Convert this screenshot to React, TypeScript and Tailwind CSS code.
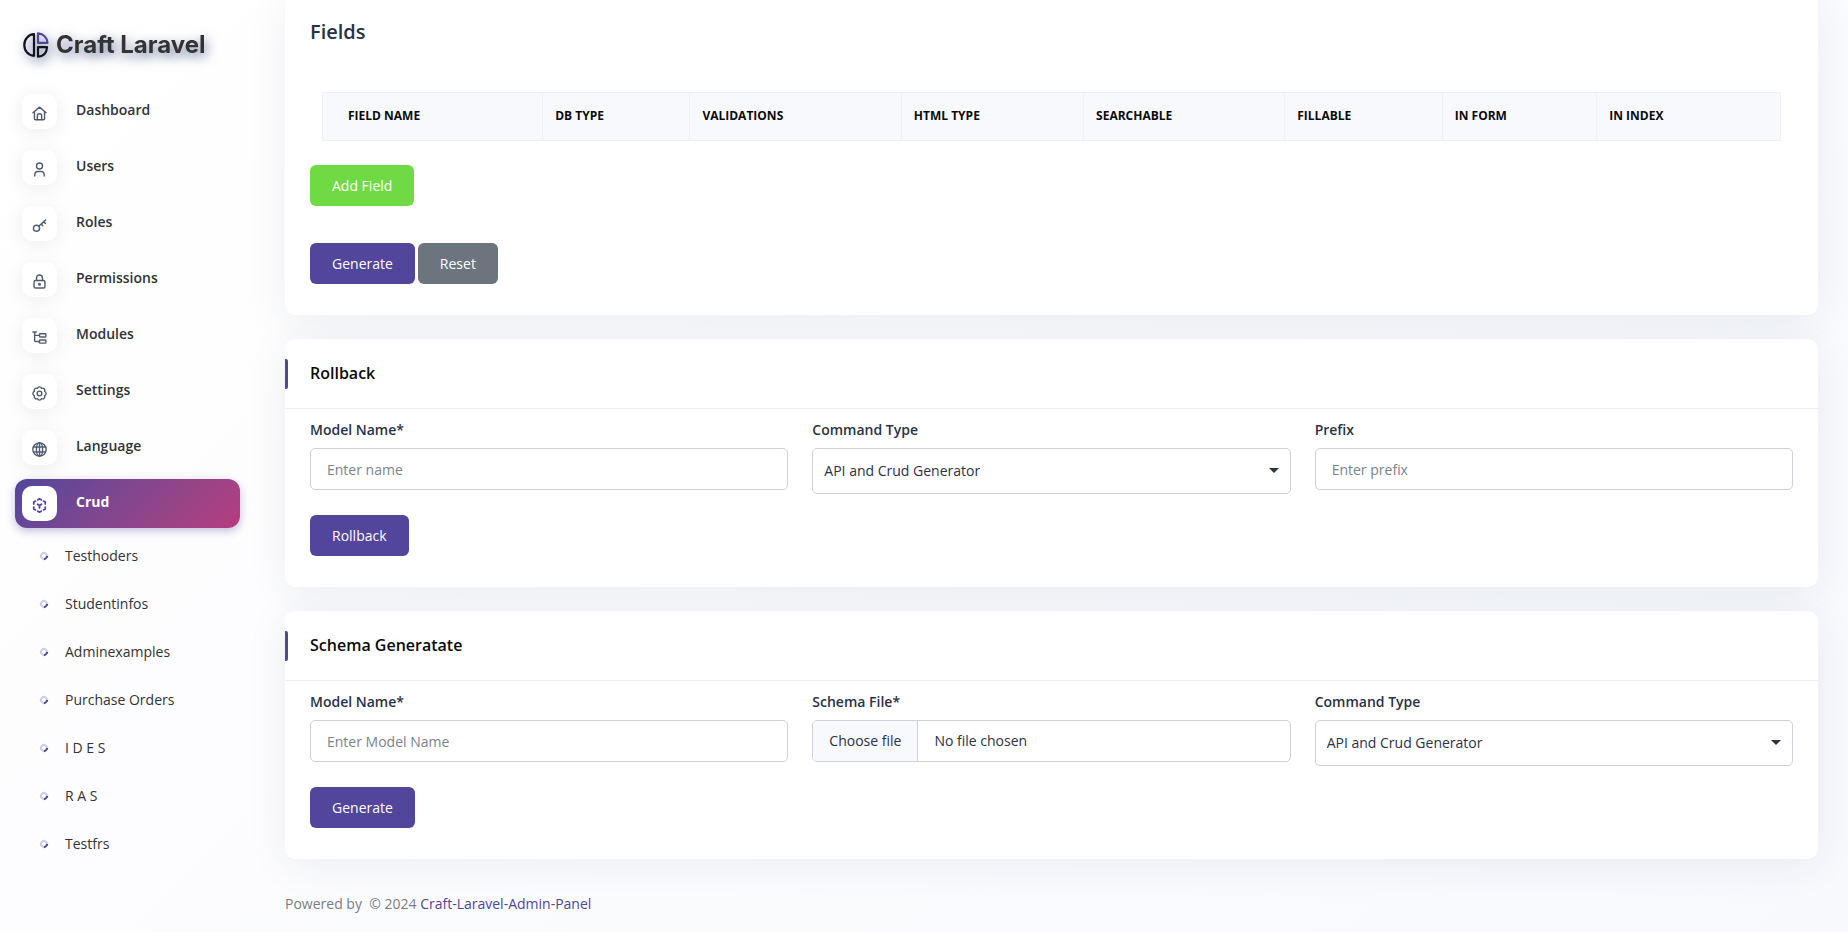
import { useState } from "react";
import type { ReactNode } from "react";

const navItems: { label: string; icon: ReactNode }[] = [
  {
    label: "Dashboard",
    icon: (
      <>
        <path d="M1 7.3 8 1.2l7 6.1" />
        <path d="M2.6 6.3v7.2c0 .8.4 1.2 1.2 1.2h8.4c.8 0 1.2-.4 1.2-1.2V6.3" />
        <path d="M5.7 14.5v-4.2c0-1.3.9-2 2.3-2s2.3.7 2.3 2v4.2" />
      </>
    ),
  },
  {
    label: "Users",
    icon: (
      <>
        <circle cx="8" cy="4.3" r="3.2" />
        <path d="M3 15v-1.6c0-2 1.2-3.3 3.2-3.3h3.6c2 0 3.2 1.300 3.2 3.3V15" />
      </>
    ),
  },
  {
    label: "Roles",
    icon: (
      <>
        <circle cx="4.8" cy="11" r="3.3" />
        <path d="M7.2 8.7 14.6 2M9.8 6.5l1.7 1.8M12.4 4l1.900 1.9" />
      </>
    ),
  },
  {
    label: "Permissions",
    icon: (
      <>
        <rect x="2.2" y="6.9" width="11.6" height="8.1" rx="1.5" />
        <path d="M4.8 6.7V4.4C4.8 2.4 6.1 1 8 1s3.2 1.400 3.2 3.4v2.3" />
        <circle cx="8" cy="10.9" r="0.9" />
      </>
    ),
  },
  {
    label: "Modules",
    icon: (
      <>
        <path d="M1 2.200h3.6M2.8 2.200v9c0 .8.3 1.100 1.100 1.100h4M2.800 5.700h5" />
        <rect x="8" y="4" width="6.8" height="3.4" rx="0.8" />
        <rect x="8" y="10.6" width="6.8" height="3.4" rx="0.8" />
      </>
    ),
  },
  {
    label: "Settings",
    icon: (
      <>
        <path d="M5.740 2.550a2.400 2.400 0 0 1 4.520 0a2.400 2.400 0 0 1 3.190 3.190a2.400 2.400 0 0 1 0 4.520a2.400 2.400 0 0 1-3.190 3.190a2.400 2.400 0 0 1-4.520 0a2.400 2.400 0 0 1-3.190-3.190a2.400 2.400 0 0 1 0-4.520a2.400 2.400 0 0 1 3.190-3.190Z" />
        <circle cx="8" cy="8" r="2.500" />
      </>
    ),
  },
  {
    label: "Language",
    icon: (
      <>
        <circle cx="8" cy="8" r="7.1" />
        <ellipse cx="8" cy="8" rx="3.3" ry="7.1" />
        <path d="M1.500 5.400h13M1.500 10.600h13M8 1v14" />
      </>
    ),
  },
  {
    label: "Crud",
    icon: (
      <>
        <path d="M6.200 1.900 8 .9l1.800 1M12.300 3.300l1.800 1v2M14.100 9.700v2l-1.800 1M9.800 14.100l-1.800 1-1.800-1M3.700 12.700l-1.800-1v-2M1.900 6.300v-2l1.800-1" />
        <path d="M5.900 6.700 8 8l2.100-1.300M8 8v2.600" />
      </>
    ),
  },
];

const subItems = ["Testhoders", "Studentinfos", "Adminexamples", "Purchase Orders", "I D E S", "R A S", "Testfrs"];

const columns = [
  { title: "Field Name", className: "w-[15.1%] pl-[25px]" },
  { title: "DB Type", className: "w-[10.1%] pl-3" },
  { title: "Validations", className: "w-[14.5%] pl-3" },
  { title: "HTML Type", className: "w-[12.5%] pl-3" },
  { title: "Searchable", className: "w-[13.8%] pl-3" },
  { title: "Fillable", className: "w-[10.8%] pl-3" },
  { title: "In Form", className: "w-[10.6%] pl-3" },
  { title: "In Index", className: "pl-3" },
];

const buttonColors = {
  primary: "bg-[#52459c]",
  success: "bg-[#70da44]",
  secondary: "bg-[#6c757d]",
};

const Button = ({ color = "primary", children }: { color?: keyof typeof buttonColors; children: ReactNode }) => (
  <button type="button" className={`h-[41px] rounded-md px-[22px] text-sm font-medium text-white ${buttonColors[color]}`}>
    {children}
  </button>
);

const Logo = () => (
  <a
    href="#"
    className="flex h-[87px] items-center gap-[7px] pt-[3px] pl-[23px] drop-shadow-[2px_4px_6px_rgba(40,55,110,0.7)]"
  >
    <svg width="26" height="26" viewBox="0 0 26 26" fill="none" strokeWidth="2.2" strokeLinejoin="round" className="shrink-0">
      <path d="M11 2.200v21.600C5.500 23.500 1.300 19 1.300 13S5.500 2.500 11 2.200Z" stroke="#11131c" />
      <path d="M15 1.300v9.500h9.500C24 5.600 20.300 1.800 15 1.300Z" stroke="#52459c" />
      <path d="M15 15.200h9c-.3 5.400-3.700 9-9 9.400Z" stroke="#11131c" />
    </svg>
    <span className="font-[Inter,sans-serif] text-2xl font-bold text-[#333]">Craft Laravel</span>
  </a>
);

const Sidebar = () => (
  <aside className="w-[255px] shrink-0">
    <Logo />
    <nav className="px-[15px]">
      <ul className="space-y-[7px]">
        {navItems.map(({ label, icon }) => {
          const active = label === "Crud";
          return (
            <li key={label}>
              <a
                href="#"
                className={`flex h-[49px] items-center gap-[19px] rounded-xl px-[7px] text-sm ${
                  active
                    ? "bg-linear-135 from-[#52459c] to-[#b53c7d] font-bold text-white shadow-[0_3px_8px_rgba(82,69,156,0.35)]"
                    : "font-semibold text-[#333]"
                }`}
              >
                <span
                  className={`flex size-[35px] items-center justify-center rounded-[10px] bg-white pt-[3px] ${
                    active ? "text-[#52459c]" : "text-[#525c70] shadow-[0_3px_20px_rgba(0,0,0,0.08)]"
                  }`}
                >
                  <svg
                    width="15"
                    height="15"
                    viewBox="0 0 16 16"
                    fill="none"
                    stroke="currentColor"
                    strokeWidth={active ? 1.9 : 1.5}
                    strokeLinecap="round"
                    strokeLinejoin="round"
                  >
                    {icon}
                  </svg>
                </span>
                <span className="pb-1">{label}</span>
              </a>
            </li>
          );
        })}
      </ul>
      <ul className="pt-1">
        {subItems.map((label) => (
          <li key={label}>
            <a href="#" className="flex h-12 items-center gap-[17px] pl-[25px] text-sm font-medium text-[#333]">
              <span className="size-2 rotate-45 rounded-full border-2 border-[#c9cfdc] border-r-[#52459c]" />
              {label}
            </a>
          </li>
        ))}
      </ul>
    </nav>
  </aside>
);

const Card = ({ title, children }: { title: string; children: ReactNode }) => (
  <section className="rounded-[10px] bg-white shadow-[0_5px_40px_rgba(40,50,95,0.08)]">
    <header className="flex h-[70px] items-center border-b border-[#eeeff2]">
      <span className="h-[30px] w-[3px] rounded-r-xs bg-[#52459c]" />
      <h2 className="pb-0.5 pl-[22px] text-base font-semibold text-[#0a0a0a]">{title}</h2>
    </header>
    <form className="px-[25px] pt-2.5 pb-[31px]">{children}</form>
  </section>
);

const Field = ({ id, label, children }: { id: string; label: string; children: ReactNode }) => (
  <div>
    <label htmlFor={id} className="mb-2 block text-sm/[21px] font-semibold">
      {label}
    </label>
    {children}
  </div>
);

const TextInput = ({ id, placeholder }: { id: string; placeholder: string }) => (
  <input
    id={id}
    type="text"
    placeholder={placeholder}
    className="h-[42px] w-full rounded-[5px] border border-[#cdd1da] bg-white px-4 text-sm placeholder:text-[#7b838c]"
  />
);

const CommandSelect = ({ id }: { id: string }) => (
  <div className="relative">
    <select
      id={id}
      className="block h-[46px] w-full appearance-none rounded-[5px] border border-[#cdd1da] bg-white pr-8 pl-[11px] text-sm"
    >
      <option>API and Crud Generator</option>
      <option>API Generator</option>
      <option>Crud Generator</option>
    </select>
    <svg width="10" height="5" viewBox="0 0 10 5" className="pointer-events-none absolute top-5 right-3">
      <path d="M0 0h10L5 5Z" fill="#2b3244" />
    </svg>
  </div>
);

export default function App() {
  const [fileName, setFileName] = useState("No file chosen");

  return (
    <div className="flex min-h-screen bg-linear-135 from-white to-[#f8f9fd] font-['Open_Sans',sans-serif] text-[#2b3244]">
      <Sidebar />

      <div className="min-w-0 flex-1 px-[30px]">
        <main className="space-y-6">
          <section className="rounded-b-[10px] bg-white px-[25px] pt-[17px] pb-[31px] shadow-[0_5px_40px_rgba(40,50,95,0.08)]">
            <h2 className="text-xl/[30px] font-semibold">Fields</h2>
            <div className="px-3 pt-[45px] pb-6">
              <table className="w-full table-fixed border-collapse">
                <thead>
                  <tr className="h-12 bg-[#f8f9fd]">
                    {columns.map(({ title, className }) => (
                      <th
                        key={title}
                        scope="col"
                        className={`border border-[#eef0f2] pb-0.5 text-left text-xs font-bold text-[#0a0a0a] uppercase ${className}`}
                      >
                        {title}
                      </th>
                    ))}
                  </tr>
                </thead>
              </table>
            </div>
            <Button color="success">Add Field</Button>
            <div className="mt-[37px] flex gap-[3px]">
              <Button>Generate</Button>
              <Button color="secondary">Reset</Button>
            </div>
          </section>

          <Card title="Rollback">
            <div className="mb-[21px] grid grid-cols-3 gap-6">
              <Field id="rollback-model" label="Model Name*">
                <TextInput id="rollback-model" placeholder="Enter name" />
              </Field>
              <Field id="rollback-command" label="Command Type">
                <CommandSelect id="rollback-command" />
              </Field>
              <Field id="rollback-prefix" label="Prefix">
                <TextInput id="rollback-prefix" placeholder="Enter prefix" />
              </Field>
            </div>
            <Button>Rollback</Button>
          </Card>

          <Card title="Schema Generatate">
            <div className="mb-[21px] grid grid-cols-3 gap-6">
              <Field id="schema-model" label="Model Name*">
                <TextInput id="schema-model" placeholder="Enter Model Name" />
              </Field>
              <Field id="schema-file" label="Schema File*">
                <label
                  htmlFor="schema-file"
                  className="relative flex h-[42px] items-stretch overflow-hidden rounded-[5px] border border-[#cdd1da] bg-white text-sm"
                >
                  <span className="flex items-center border-r border-[#cdd1da] bg-[#f8f9fd] px-4">Choose file</span>
                  <span className="flex items-center px-4">{fileName}</span>
                  <input
                    id="schema-file"
                    type="file"
                    className="sr-only"
                    onChange={(e) => setFileName(e.target.files?.[0]?.name ?? "No file chosen")}
                  />
                </label>
              </Field>
              <Field id="schema-command" label="Command Type">
                <CommandSelect id="schema-command" />
              </Field>
            </div>
            <Button>Generate</Button>
          </Card>
        </main>

        <footer className="pt-[35px] pb-4 text-sm text-[#777e88]">
          Powered by &nbsp;© 2024{" "}
          <a href="#" className="text-[#52459c]">
            Craft-Laravel-Admin-Panel
          </a>
        </footer>
      </div>
    </div>
  );
}
